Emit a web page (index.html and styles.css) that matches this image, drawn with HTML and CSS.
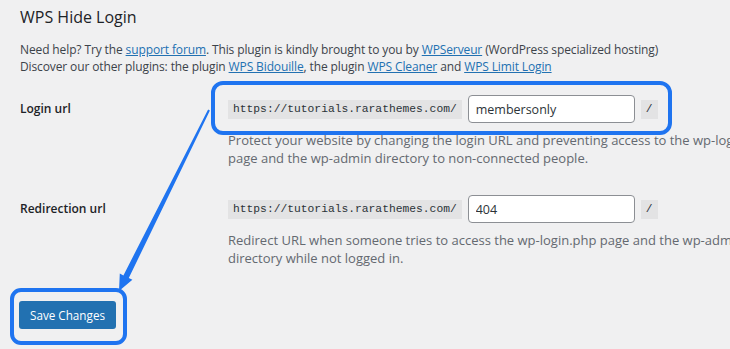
FILE: index.html
```html
<!DOCTYPE html>
<html lang="en">
<head>
    <meta charset="UTF-8">
    <title>WPS Hide Login</title>
    <link rel="stylesheet" href="styles.css">
</head>
<body>
    <div class="wrap">
        <h1>WPS Hide Login</h1>

        <p class="help">
            Need help? Try the <a href="#">support forum</a>. This plugin is kindly brought to you by <a href="#">WPServeur</a> (WordPress specialized hosting)<br>
            Discover our other plugins: the plugin <a href="#">WPS Bidouille</a>, the plugin <a href="#">WPS Cleaner</a> and <a href="#">WPS Limit Login</a>
        </p>

        <div class="form-table">
            <div class="row row-login">
                <label for="login_url">Login url</label>
                <div class="field">
                    <div class="url-line">
                        <code>https://tutorials.rarathemes.com/</code>
                        <input type="text" id="login_url" value="membersonly">
                        <code>/</code>
                    </div>
                    <p class="description">Protect your website by changing the login URL and preventing access to the wp-login page and the wp-admin directory to non-connected people.</p>
                </div>
            </div>

            <div class="row row-redirect">
                <label for="redirect_url">Redirection url</label>
                <div class="field">
                    <div class="url-line">
                        <code>https://tutorials.rarathemes.com/</code>
                        <input type="text" id="redirect_url" value="404">
                        <code>/</code>
                    </div>
                    <p class="description">Redirect URL when someone tries to access the wp-login.php page and the wp-admin directory while not logged in.</p>
                </div>
            </div>
        </div>

        <p class="submit">
            <button type="submit">Save Changes</button>
        </p>
    </div>

    <!-- annotations drawn over the screenshot -->
    <div class="mark mark-url"></div>
    <div class="mark mark-save"></div>
    <svg class="arrow" width="730" height="349" viewBox="0 0 730 349">
        <polygon points="208.1,109.6 209.9,110.4 128.8,278 132.4,279.8 119,291 119.8,273.6 123.4,275.4" fill="#1f74f0"/>
    </svg>
</body>
</html>
```

FILE: styles.css
```css
body {
    margin: 0;
    background: #f0f0f1;
    color: #1d2327;
    font-family: "Open Sans", "Noto Sans", sans-serif;
    font-size: 12px;
    overflow: hidden;
    position: relative;
    width: 730px;
    height: 349px;
}
.wrap {
    padding: 0 20px;
    width: 900px;
}
h1 {
    margin: 0;
    padding-top: 5px;
    font-size: 16px;
    line-height: 24px;
    font-weight: 500;
    color: #1d2327;
}
.help {
    margin: 12px 0 0;
    line-height: 17px;
    letter-spacing: -0.12px;
    color: #3c434a;
}
a {
    color: #2271b1;
    text-decoration: underline;
}
.form-table {
    margin-top: 20px;
}
.row {
    display: grid;
    grid-template-columns: 208px 1fr;
}
.row-redirect {
    margin-top: 28px;
}
label {
    font-weight: 600;
    color: #1d2327;
    line-height: 28px;
}
.url-line {
    display: flex;
    align-items: center;
    gap: 6px;
}
code {
    background: #e3e3e4;
    font-family: "Liberation Mono", monospace;
    font-size: 11.3px;
    padding: 3px 5px;
    color: #2c3338;
    line-height: 13px;
}
input {
    width: 167px;
    height: 28px;
    box-sizing: border-box;
    padding: 0 7px;
    border: 1px solid #8c8f94;
    border-radius: 4px;
    background: #fff;
    font-family: "Open Sans", "Noto Sans", sans-serif;
    font-size: 12.5px;
    color: #2c3338;
}
.description {
    margin: 8px 0 0;
    width: 520px;
    font-size: 13px;
    line-height: 18px;
    color: #646970;
}
.submit {
    margin: 34px 0 0;
}
button {
    margin-left: -1px;
    height: 28px;
    padding: 0 11px;
    border: none;
    border-radius: 3px;
    background: #2271b1;
    color: #fff;
    font-family: "Open Sans", "Noto Sans", sans-serif;
    font-size: 11.7px;
}
.mark {
    position: absolute;
    border: 4px solid #1f74f0;
    border-radius: 12px;
    box-sizing: border-box;
}
.mark-url {
    left: 211px;
    top: 81px;
    width: 461px;
    height: 54px;
}
.mark-save {
    left: 10px;
    top: 288px;
    width: 117px;
    height: 57px;
    border-radius: 11px;
}
.arrow {
    position: absolute;
    left: 0;
    top: 0;
}
```
